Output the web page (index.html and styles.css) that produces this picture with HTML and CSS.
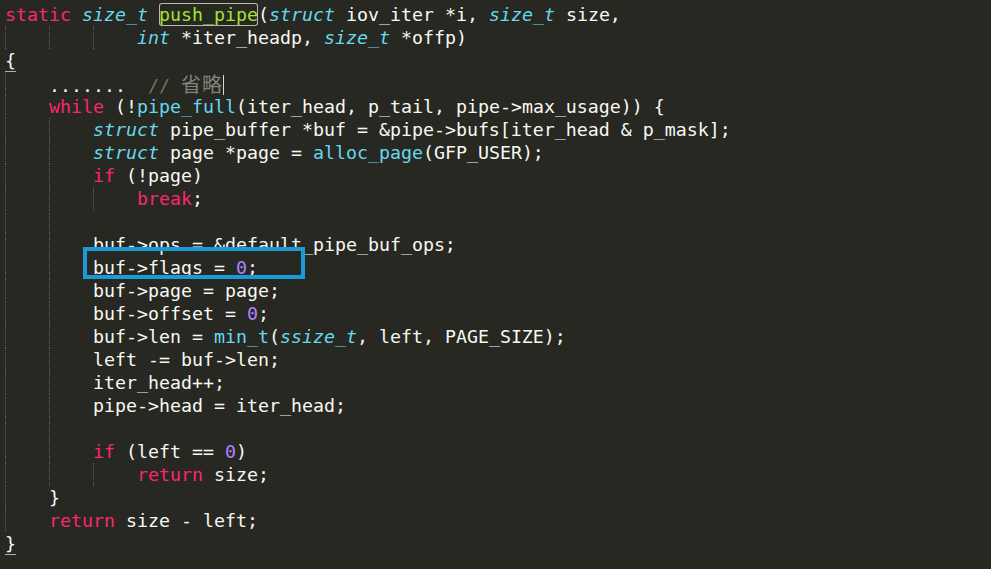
FILE: index.html
```html
<!DOCTYPE html>
<html lang="en">
<head>
<meta charset="utf-8">
<title>push_pipe</title>
<link rel="stylesheet" href="styles.css">
</head>
<body>
<div class="editor">
  <div class="code">
    <div class="line"><span class="k">static</span> <span class="t">size_t</span> <span class="d">push_pipe</span>(<span class="t">struct</span> iov_iter *i, <span class="t">size_t</span> size,</div>
    <div class="line g012">            <span class="t">int</span> *iter_headp, <span class="t">size_t</span> *offp)</div>
    <div class="line"><span class="brace">{</span></div>
    <div class="line g0">    .......  <span class="c">// <span class="cjk">省略</span></span><span class="caret"></span></div>
    <div class="line g0">    <span class="k">while</span> (!<span class="f">pipe_full</span>(iter_head, p_tail, pipe-&gt;max_usage)) {</div>
    <div class="line g01">        <span class="t">struct</span> pipe_buffer *buf = &amp;pipe-&gt;bufs[iter_head &amp; p_mask];</div>
    <div class="line g01">        <span class="t">struct</span> page *page = <span class="f">alloc_page</span>(GFP_USER);</div>
    <div class="line g01">        <span class="k">if</span> (!page)</div>
    <div class="line g012">            <span class="k">break</span>;</div>
    <div class="line g01"> </div>
    <div class="line g01">        buf-&gt;ops = &amp;default_pipe_buf_ops;</div>
    <div class="line g01">        buf-&gt;flags = <span class="n">0</span>;</div>
    <div class="line g01">        buf-&gt;page = page;</div>
    <div class="line g01">        buf-&gt;offset = <span class="n">0</span>;</div>
    <div class="line g01">        buf-&gt;len = <span class="f">min_t</span>(<span class="t">ssize_t</span>, left, PAGE_SIZE);</div>
    <div class="line g01">        left -= buf-&gt;len;</div>
    <div class="line g01">        iter_head++;</div>
    <div class="line g01">        pipe-&gt;head = iter_head;</div>
    <div class="line g01"> </div>
    <div class="line g01">        <span class="k">if</span> (left == <span class="n">0</span>)</div>
    <div class="line g012">            <span class="k">return</span> size;</div>
    <div class="line g0">    }</div>
    <div class="line g0">    <span class="k">return</span> size - left;</div>
    <div class="line"><span class="brace">}</span></div>
    <div class="mark"></div>
  </div>
</div>
</body>
</html>
```
FILE: styles.css
```css
html, body {
  margin: 0;
  padding: 0;
  background: #272822;
  overflow: hidden;
}

.editor {
  width: 991px;
  height: 569px;
  background: #272822;
}

.code {
  position: relative;
  padding-top: 3px;
  font-family: "DejaVu Sans Mono", "Noto Sans CJK SC", monospace;
  font-size: 18.27px;
  line-height: 23px;
  color: #f8f8f2;
  --dot: linear-gradient(to bottom, #64645a 0 1px, transparent 1px 2px);
}

.line {
  height: 23px;
  padding-left: 5px;
  white-space: pre;
}

.g0 {
  background: var(--dot) 5px 0 / 1px 2px repeat-y;
}

.g01 {
  background:
    var(--dot) 5px 0 / 1px 2px repeat-y,
    var(--dot) 49px 0 / 1px 2px repeat-y;
}

.g012 {
  background:
    var(--dot) 5px 0 / 1px 2px repeat-y,
    var(--dot) 49px 0 / 1px 2px repeat-y,
    var(--dot) 93px 0 / 1px 2px repeat-y;
}

.k { color: #f92672; }
.t { color: #66d9ef; font-style: italic; }
.f { color: #66d9ef; }
.d {
  color: #a6e22e;
  display: inline-block;
  height: 23px;
  box-shadow: inset 0 0 0 1px #b9b9b0;
  border-radius: 3px;
}
.n { color: #ae81ff; }
.c { color: #75715e; }

.cjk {
  font-family: "Noto Sans CJK SC", sans-serif;
  font-size: 20px;
  letter-spacing: 1px;
  color: #85837a;
}

.caret {
  display: inline-block;
  width: 1px;
  height: 20px;
  background: #d8d8d0;
  vertical-align: -3px;
}

.brace {
  display: inline-block;
  height: 23px;
  box-shadow: inset 0 -1px #b0b0a8;
}

.mark {
  position: absolute;
  left: 83px;
  top: 247px;
  width: 214px;
  height: 24px;
  border: 4px solid #1a9ad8;
}
```
